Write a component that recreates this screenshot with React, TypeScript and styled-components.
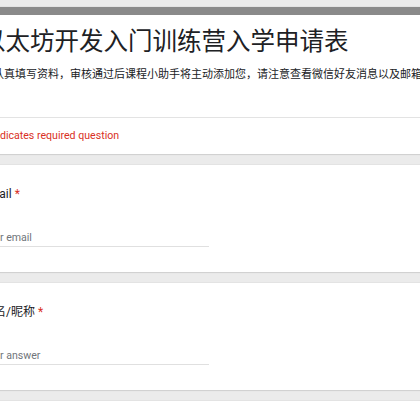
import React from 'react'
import styled, { createGlobalStyle } from 'styled-components'

const GlobalStyle = createGlobalStyle`
    html, body {
        margin: 0;
        padding: 0;
        background-color: #ebebeb;
    }
    body {
        font-family: Roboto, "Noto Sans CJK SC", "Noto Sans", sans-serif;
        color: #202124;
    }
    #root {
        width: 420px;
        height: 420px;
        overflow: hidden;
    }
`

const Page = styled.main`
    width: 486px;
    margin-left: -36px;
    padding-top: 7px;
    display: flex;
    flex-direction: column;
    gap: 11px;
`

const Card = styled.section<{ $header?: boolean }>`
    background-color: #ffffff;
    border-top: ${(p) => (p.$header ? '8px solid #8a8a8a' : 'none')};
    box-shadow: 0 1px 1px rgba(0, 0, 0, 0.08), 0 0 0 1px rgba(0, 0, 0, 0.03);
`

const HeaderTop = styled.div`
    padding: 11px 18px 34px 18px;
    h1 {
        margin: 0 0 0 -1px;
        font-size: 24.5px;
        line-height: 32px;
        font-weight: 400;
        color: #202124;
        white-space: nowrap;
    }
    .desc {
        margin: 9px 0 0 0;
        font-size: 11px;
        line-height: 16px;
        color: #202124;
        white-space: nowrap;
    }
`

const Required = styled.div`
    border-top: 1px solid #e3e3e3;
    padding: 10px 18px 10px 20px;
    font-size: 10.6px;
    line-height: 16px;
    color: #d93025;
`

const Question = styled.div`
    padding: 20px 18px 26px 18px;
    height: 107px;
    box-sizing: border-box;
    .label {
        font-size: 12px;
        line-height: 18px;
        color: #202124;
        white-space: nowrap;
        span {
            color: #d93025;
        }
    }
`

const AnswerLine = styled.div`
    width: 227px;
    margin-top: 28px;
    padding-bottom: 1px;
    border-bottom: 1px solid #e0e0e0;
    font-size: 10.6px;
    line-height: 14px;
    color: #70757a;
`

const App = () => {
    const questions = [
        { id: 1, label: 'Email', placeholder: 'Your email' },
        { id: 2, label: '姓名/昵称', placeholder: 'Your answer' },
        { id: 3, label: '微信号', placeholder: 'Your answer' },
    ]
    return (
        <>
            <GlobalStyle />
            <Page>
                <Card $header>
                    <HeaderTop>
                        <h1>以太坊开发入门训练营入学申请表</h1>
                        <p className='desc'>请认真填写资料，审核通过后课程小助手将主动添加您，请注意查看微信好友消息以及邮箱</p>
                    </HeaderTop>
                    <Required>* Indicates required question</Required>
                </Card>
                {questions.map((q) => (
                    <Card key={q.id}>
                        <Question>
                            <div className='label'>
                                {q.label} <span>*</span>
                            </div>
                            <AnswerLine>{q.placeholder}</AnswerLine>
                        </Question>
                    </Card>
                ))}
            </Page>
        </>
    )
}

export default App
